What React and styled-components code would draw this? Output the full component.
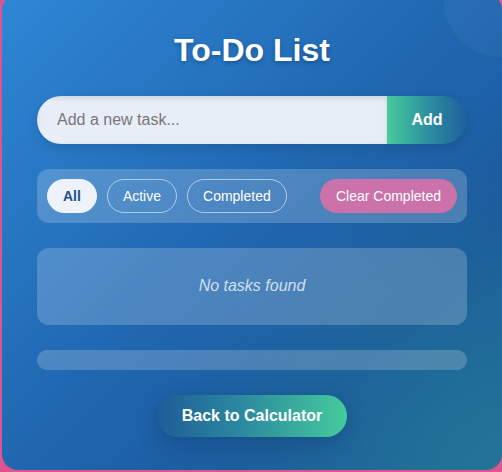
import styled, { createGlobalStyle } from "styled-components";

const GlobalStyle = createGlobalStyle`
  html, body {
    margin: 0;
    padding: 0;
    background: #dd5590;
    font-family: "Liberation Sans", Arial, sans-serif;
    overflow: hidden;
  }
  * {
    box-sizing: border-box;
  }
`;

const Page = styled.div`
  padding-left: 2px;
`;

const Card = styled.div`
  overflow: hidden;
  width: 500px;
  height: 476px;
  margin-top: -6px;
  padding: 38px 35px 33px;
  border-radius: 16px;
  background:
    radial-gradient(circle at 100% 1%, rgba(255, 255, 255, 0.035) 0, rgba(255, 255, 255, 0.035) 58px, transparent 59px),
    radial-gradient(ellipse at 100% 100%, rgba(40, 140, 150, 0.45) 0, transparent 45%),
    linear-gradient(135deg, #2e87d6 0%, #2169b3 45%, #1b5a9b 75%, #1e6398 100%);
  display: flex;
  flex-direction: column;
  gap: 25px;
  color: #fff;
`;

const Title = styled.h1`
  margin: 0 0 2px;
  text-align: center;
  font-size: 32px;
  font-weight: 700;
  text-shadow: 0 2px 4px rgba(0, 0, 0, 0.25);
`;

const InputRow = styled.div`
  display: flex;
  height: 48px;
  border-radius: 24px;
  overflow: hidden;
  box-shadow: 0 4px 12px rgba(0, 0, 0, 0.12);
`;

const TaskInput = styled.input`
  flex: 1;
  border: none;
  outline: none;
  padding: 0 20px;
  font-family: inherit;
  font-size: 16px;
  background: #e8eef7;
  color: #333;
  box-shadow: inset 0 2px 5px rgba(0, 0, 0, 0.12);
  &::placeholder {
    color: #777;
  }
`;

const AddButton = styled.button`
  width: 80px;
  border: none;
  font-family: inherit;
  font-size: 16px;
  font-weight: 700;
  color: #fff;
  background: linear-gradient(90deg, #46cb9c 0%, #2b8b9f 55%, #1f5e9d 100%);
  border-radius: 0 24px 24px 0;
  cursor: pointer;
`;

const FilterBar = styled.div`
  display: flex;
  align-items: center;
  gap: 10px;
  padding: 10px;
  border-radius: 12px;
  background: rgba(255, 255, 255, 0.2);
`;

const FilterButton = styled.button`
  height: 34px;
  padding: 0 15px;
  border-radius: 17px;
  font-family: inherit;
  font-size: 14px;
  cursor: pointer;
  border: 1px solid ${(p) => (p.active ? "#eef3fa" : "rgba(255, 255, 255, 0.55)")};
  background: ${(p) => (p.active ? "#eef3fa" : "transparent")};
  color: ${(p) => (p.active ? "#1f4f8d" : "#fff")};
  font-weight: ${(p) => (p.active ? 700 : 400)};
`;

const ClearButton = styled.button`
  margin-left: auto;
  height: 34px;
  padding: 0 16px;
  border: none;
  border-radius: 17px;
  background: #cc72aa;
  color: #fff;
  font-family: inherit;
  font-size: 14px;
  cursor: pointer;
`;

const EmptyBox = styled.div`
  height: 78px;
  display: flex;
  align-items: center;
  justify-content: center;
  border-radius: 12px;
  background: rgba(255, 255, 255, 0.2);
  font-size: 16px;
  font-style: italic;
  color: rgba(255, 255, 255, 0.75);
`;

const Progress = styled.div`
  height: 20px;
  border-radius: 10px;
  background: rgba(255, 255, 255, 0.2);
  overflow: hidden;
`;

const Fill = styled.div`
  height: 100%;
  background: #46cb9c;
`;

const Footer = styled.div`
  display: flex;
  justify-content: center;
`;

const BackButton = styled.button`
  height: 42px;
  padding: 0 25px;
  border: none;
  border-radius: 21px;
  background: linear-gradient(90deg, #1e5c98 0%, #2b8a9f 45%, #46cb9c 100%);
  color: #fff;
  font-family: inherit;
  font-size: 16px;
  font-weight: 700;
  box-shadow: 0 6px 22px rgba(10, 40, 90, 0.3);
  cursor: pointer;
`;

export default function App() {
  const done = 0;
  return (
    <Page>
      <GlobalStyle />
      <Card>
        <Title>To-Do List</Title>
        <InputRow>
          <TaskInput placeholder="Add a new task..." />
          <AddButton>Add</AddButton>
        </InputRow>
        <FilterBar>
          <FilterButton active>All</FilterButton>
          <FilterButton>Active</FilterButton>
          <FilterButton>Completed</FilterButton>
          <ClearButton>Clear Completed</ClearButton>
        </FilterBar>
        <EmptyBox>No tasks found</EmptyBox>
        <Progress>
          <Fill style={{ width: `${done}%` }} />
        </Progress>
        <Footer>
          <BackButton>Back to Calculator</BackButton>
        </Footer>
      </Card>
    </Page>
  );
}
